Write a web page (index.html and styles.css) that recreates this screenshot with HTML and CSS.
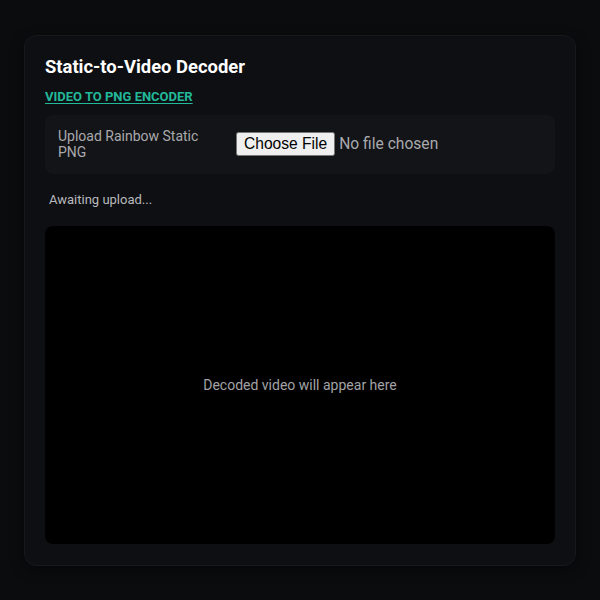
FILE: index.html
```html
<!DOCTYPE html>
<html lang="en">
<head>
<meta charset="utf-8">
<title>Static-to-Video Decoder</title>
<link rel="stylesheet" href="styles.css">
</head>
<body>
<main class="card">
  <h1 class="title">Static-to-Video Decoder</h1>
  <a class="mode-link" href="#">Video to PNG Encoder</a>
  <div class="upload-row">
    <label class="upload-label" for="file">Upload Rainbow Static PNG</label>
    <input class="file-input" id="file" type="file" accept="image/png">
  </div>
  <p class="status">Awaiting upload...</p>
  <div class="video-box">
    <span class="placeholder">Decoded video will appear here</span>
  </div>
</main>
</body>
</html>
```

FILE: styles.css
```css
html, body {
  margin: 0;
  background: #0b0c0e;
}
body {
  padding: 35px 24px 34px;
  font-family: Roboto, "Liberation Sans", sans-serif;
  color: #e6e6e6;
}
.card {
  display: flex;
  flex-direction: column;
  background: #0e0f12;
  border: 1px solid #17181c;
  border-radius: 12px;
  padding: 19px 20px 21px;
  box-shadow: 0 4px 14px rgba(0,0,0,0.45);
}
.title {
  margin: 0;
  font-size: 18.4px;
  line-height: 23px;
  font-weight: 700;
  color: #ffffff;
}
.mode-link {
  align-self: flex-start;
  margin-top: 11px;
  font-size: 13px;
  line-height: 16px;
  font-weight: 700;
  text-transform: uppercase;
  color: #22b89a;
  text-decoration: underline;
  text-underline-offset: 2px;
}
.upload-row {
  margin-top: 10px;
  display: flex;
  align-items: center;
  gap: 18px;
  padding: 13px 13px 14px;
  background: #131417;
  border-radius: 8px;
}
.upload-label {
  flex: 0 0 160px;
  font-size: 14px;
  line-height: 16px;
  color: #a9a9ad;
}
.file-input {
  font-family: Roboto, "Liberation Sans", sans-serif;
  font-size: 15.6px;
  color: #a9a9ad;
}
.status {
  margin: 18px 0 0;
  padding-left: 4px;
  font-size: 13px;
  line-height: 16px;
  color: #b9b9bd;
}
.video-box {
  margin-top: 18px;
  height: 318px;
  background: #000000;
  border-radius: 8px;
  display: flex;
  align-items: center;
  justify-content: center;
}
.placeholder {
  font-size: 14px;
  color: #a3a3a7;
}
```
